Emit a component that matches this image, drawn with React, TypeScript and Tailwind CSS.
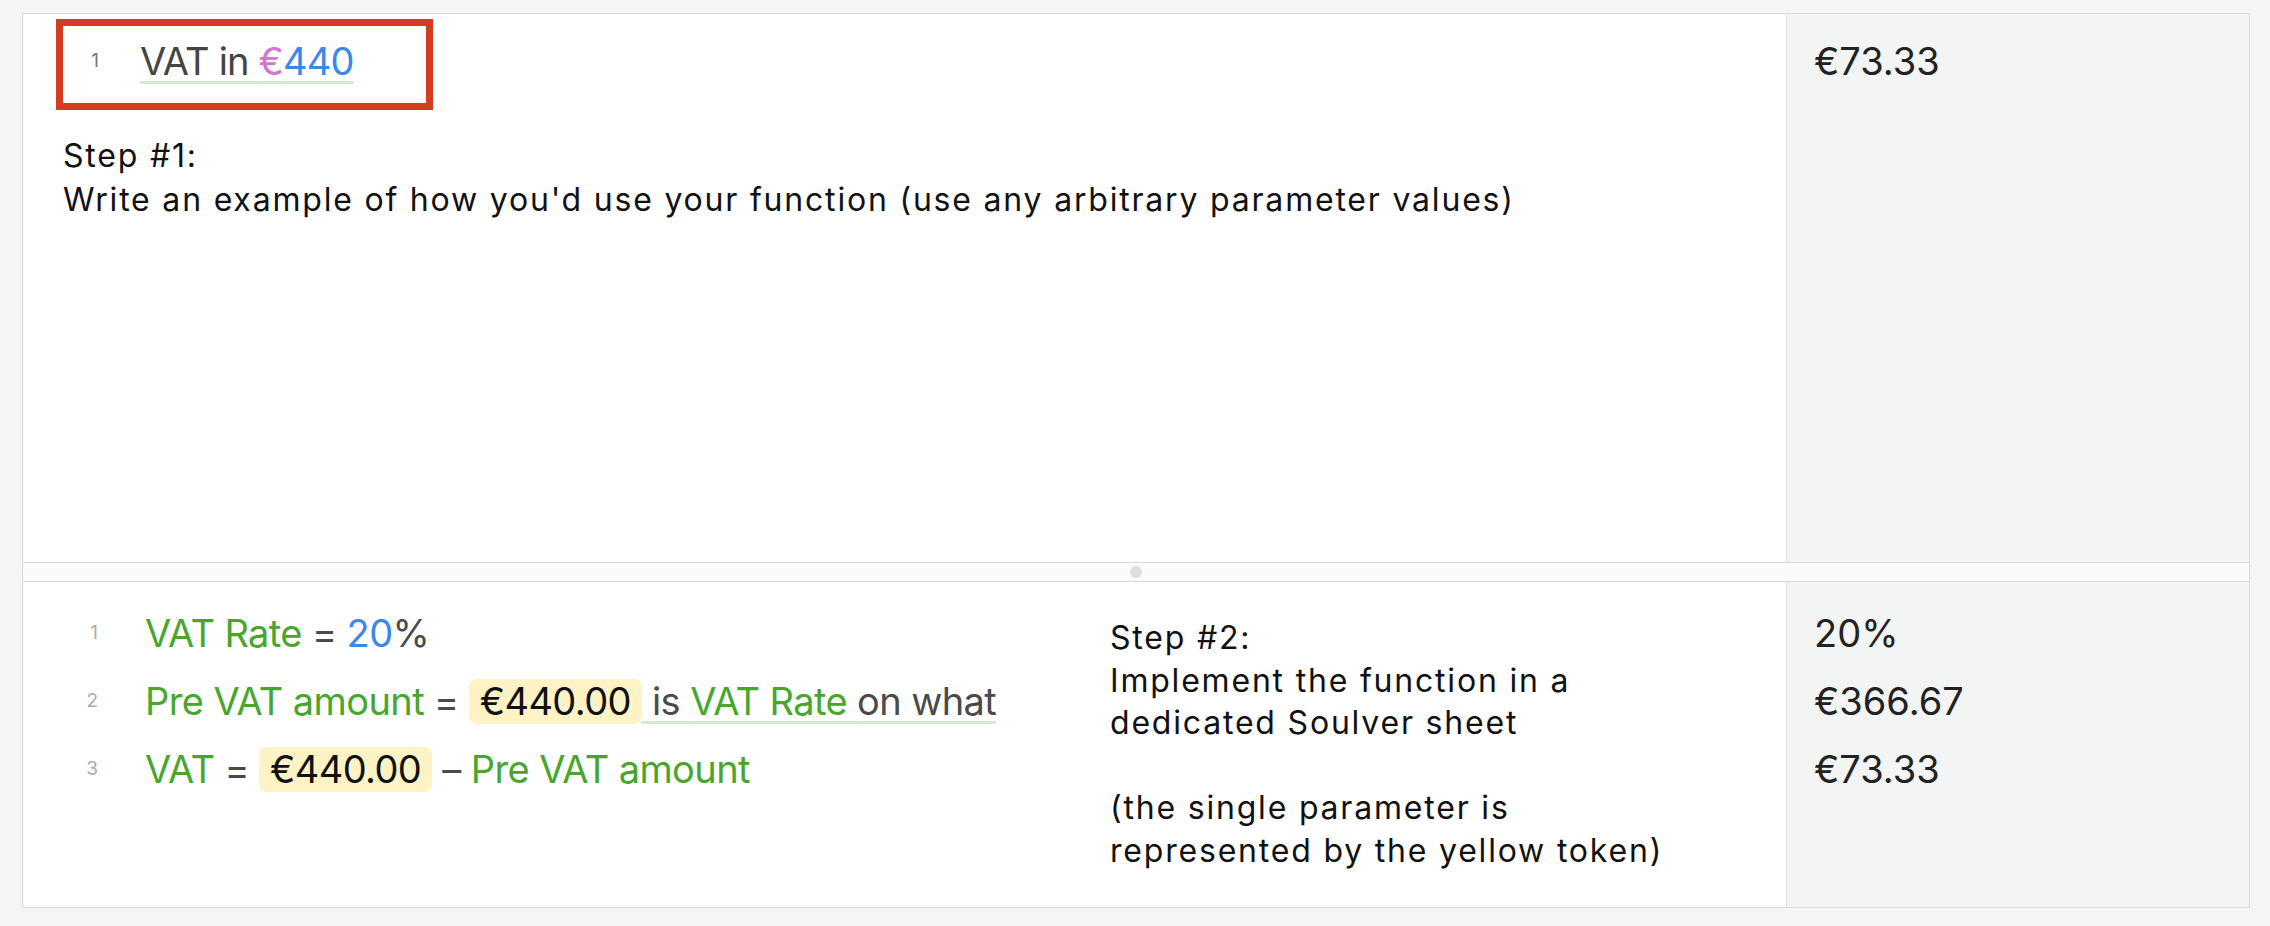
import React from 'react'

const font = { fontFamily: 'Inter, "Noto Sans", sans-serif' }

function Token({ children }: { children: React.ReactNode }) {
  return (
    <span className="inline-block rounded-[8px] bg-[#fdf3c5] px-[11px] leading-[45px] text-[#111]">
      {children}
    </span>
  )
}

function Gutter({ n, className }: { n: number; className: string }) {
  return (
    <span className={`w-[32px] shrink-0 text-right text-[19px] tracking-normal ${className}`}>{n}</span>
  )
}

const green = 'text-[#47a72c]'
const blue = 'text-[#3c87ea]'
const gray = 'text-[#4a4a4a]'

export default function App() {
  return (
    <div
      className="h-[926px] w-[2270px] bg-[#f5f5f5] pl-[22px] pt-[13px] antialiased"
      style={font}
    >
      <div className="flex h-[895px] w-[2228px] flex-col border border-[#dadada]">
        {/* top sheet */}
        <div className="flex h-[548px]">
          <div className="relative flex-1 bg-white pl-[44px] pt-[13px]">
            <div className="absolute left-[33px] top-[5px] h-[91px] w-[377px] border-[7px] border-[#d33b23]" />
            <div className="flex h-[68px] items-center text-[38px] tracking-[-0.8px] text-[#444]">
              <Gutter n={1} className="text-[#777]" />
              <span className="ml-[41px] underline decoration-[#d6ebcd] decoration-[3px] underline-offset-[6px]">
                VAT in <span className="text-[#d175d4]">€</span>
                <span className={blue}>440</span>
              </span>
            </div>
            <div className="ml-[-4px] mt-[39px] text-[32px] leading-[44px] tracking-[1.8px] text-[#111]">
              Step #1:
              <br />
              Write an example of how you'd use your function (use any arbitrary parameter values)
            </div>
          </div>
          <div className="w-[463px] border-l border-[#e0e0e0] bg-[#f3f4f4] pl-[27px] pt-[13px] text-[38px] text-[#222]">
            <div className="flex h-[68px] items-center">€73.33</div>
          </div>
        </div>

        {/* splitter */}
        <div className="flex h-[20px] items-center border-y border-[#d6d6d6] bg-[#fafafa] pl-[1107px]">
          <div className="h-[12px] w-[12px] rounded-full bg-[#dedede]" />
        </div>

        {/* function sheet */}
        <div className="flex flex-1">
          <div className="flex flex-1 bg-white">
            <div className="w-[1087px] pl-[43px] pt-[17px] text-[38px] tracking-[-0.6px]">
              <div className="flex h-[68px] items-center">
                <Gutter n={1} className="text-[#aaa]" />
                <span className="ml-[47px]">
                  <span className={green}>VAT Rate</span> <span className={gray}>=</span>{' '}
                  <span className={blue}>20</span>
                  <span className={gray}>%</span>
                </span>
              </div>
              <div className="flex h-[68px] items-center">
                <Gutter n={2} className="text-[#aaa]" />
                <span className="ml-[47px] whitespace-nowrap">
                  <span className={green}>Pre VAT amount</span> <span className={gray}>=</span>{' '}
                  <Token>€440.00</Token>
                  <span className="underline decoration-[#d6ebcd] decoration-[3px] underline-offset-[6px]">
                    {' '}
                    <span className={gray}>is</span> <span className={green}>VAT Rate</span>{' '}
                    <span className={gray}>on what</span>
                  </span>
                </span>
              </div>
              <div className="flex h-[68px] items-center">
                <Gutter n={3} className="text-[#aaa]" />
                <span className="ml-[47px] whitespace-nowrap">
                  <span className={green}>VAT</span> <span className={gray}>=</span>{' '}
                  <Token>€440.00</Token> <span className={gray}>–</span>{' '}
                  <span className={green}>Pre VAT amount</span>
                </span>
              </div>
            </div>
            <div className="pt-[35px] text-[32px] leading-[42.5px] tracking-[1.8px] text-[#111]">
              Step #2:
              <br />
              Implement the function in a
              <br />
              dedicated Soulver sheet
              <br />
              <br />
              (the single parameter is
              <br />
              represented by the yellow token)
            </div>
          </div>
          <div className="w-[463px] border-l border-[#e0e0e0] bg-[#f3f4f4] pl-[27px] pt-[17px] text-[38px] text-[#222]">
            <div className="flex h-[68px] items-center">20%</div>
            <div className="flex h-[68px] items-center">€366.67</div>
            <div className="flex h-[68px] items-center">€73.33</div>
          </div>
        </div>
      </div>
    </div>
  )
}
